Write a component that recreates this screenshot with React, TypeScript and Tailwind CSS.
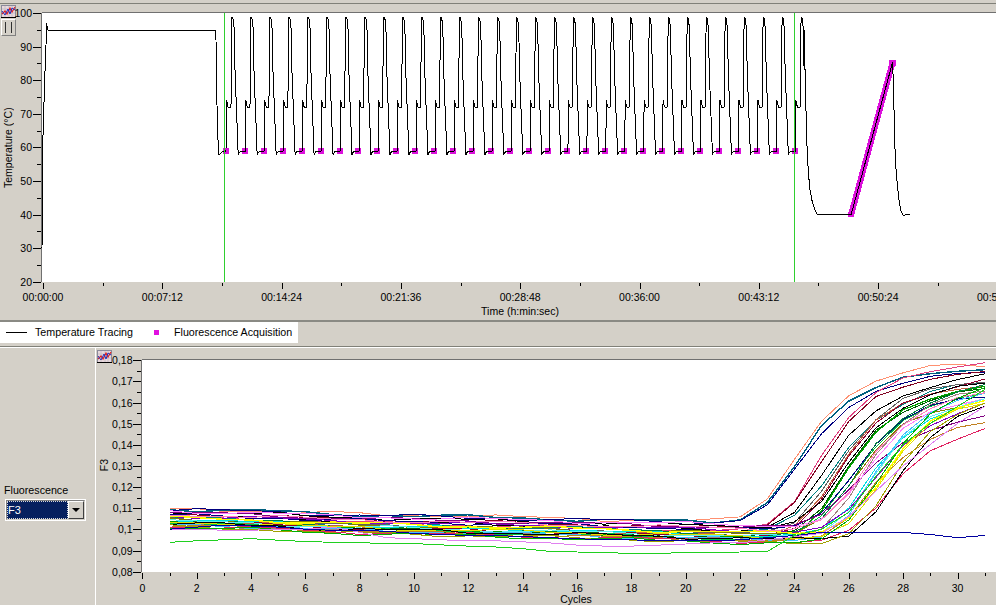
const TRACE = "#000000";
const MAGENTA = "#dc10dc";

function ChartIcon() {
  return (
    <svg width="15" height="13" viewBox="0 0 15 13" className="block">
      <rect x="0.5" y="0.5" width="14" height="12" fill="#e8d8dc" stroke="#8a8a9a" />
      <path d="M1 4h13M1 8h13M4 1v11M8 1v11M11 1v11" stroke="#c8c0c8" />
      <path d="M1 9l3-3 2 3 3-6 2 4 3-5" fill="none" stroke="#e02020" strokeWidth="1.2" />
      <path d="M1 6l3 4 3-6 2 5 2-6 3 2" fill="none" stroke="#2030c0" />
      <path d="M0 12.5h15" stroke="#000" />
    </svg>
  );
}

function buildTrace() {
  const pts: [number, number][] = [[42, 248], [43, 135], [44.7, 80], [46, 45], [46.5, 23], [47.5, 28], [48, 30]];
  for (let x = 50; x < 215; x += 3) pts.push([x, x % 2 ? 30 : 30.8]);
  pts.push([215, 30], [216, 40], [217, 105], [218, 140], [219, 155], [222, 152], [226, 151], [226.5, 100], [228, 107], [231, 107]);
  for (let i = 0; i < 31; i++) {
    const p = 232.7 + i * 18.97;
    pts.push([p - 1.5, 70], [p - 0.7, 17], [p + 0.5, 19], [p + 1.5, 29], [p + 2.3, 70]);
    if (i < 30) {
      pts.push([p + 3.8, 110], [p + 4.8, 135], [p + 5.5, 155], [p + 6.2, 153], [p + 8, 151], [p + 12.8, 151], [p + 13, 100], [p + 14.5, 107], [p + 17.3, 107]);
    }
  }
  pts.push([804, 30], [805.3, 80], [806.7, 140], [808.3, 172], [810, 190], [812.3, 202], [815, 210], [817.3, 215]);
  for (let x = 820; x < 851; x += 3) pts.push([x, x % 2 ? 215 : 214.4]);
  pts.push(
    [851, 215], [892.7, 62], [894.3, 120], [895.3, 160], [896.7, 178], [899, 200], [901, 211], [903.3, 216],
    [905, 215], [907, 214], [910, 215],
  );
  return pts.map((p) => p.join(",")).join(" ");
}

function TemperatureChart() {
  const yTicks = [];
  for (let t = 20; t <= 100; t += 5) yTicks.push(t);
  const xTicks = [];
  for (let i = 0; i <= 16; i++) xTicks.push(43 + i * 59.65);
  const labels = ["00:00:00", "00:07:12", "00:14:24", "00:21:36", "00:28:48", "00:36:00", "00:43:12", "00:50:24", "00:57:36"];
  const marks = [];
  for (let i = 0; i < 31; i++) marks.push(225.2 + i * 18.97);

  return (
    <svg width="979" height="316" viewBox="17 4 979 316" className="block shrink-0 overflow-visible">
      <rect x="42" y="13" width="954" height="269" fill="#fff" />
      <g shapeRendering="crispEdges">
        <path d="M41.5 12.5H996M41.5 12.5V282" stroke="#707070" fill="none" />
        {yTicks.map((t) => {
          const y = Math.round(13 + (100 - t) * 3.36) + 0.5;
          return <path key={t} d={`M${t % 10 === 0 ? 33 : 37} ${y}H41`} stroke={TRACE} />;
        })}
        {xTicks.map((x, i) => (
          <path key={i} d={`M${Math.round(x) + 0.5} 283V${i % 2 === 0 ? 289 : 286}`} stroke={TRACE} />
        ))}
        {marks.map((x) => (
          <rect key={x} x={Math.round(x - 2.5)} y="148" width="6" height="6" fill={MAGENTA} />
        ))}
        <path d="M851 215L892.7 62" stroke={MAGENTA} strokeWidth="6" fill="none" />
        <rect x="889" y="60" width="7" height="6" fill={MAGENTA} />
        <rect x="848" y="212" width="6" height="5" fill={MAGENTA} />
        <polyline points={buildTrace()} fill="none" stroke={TRACE} strokeLinejoin="bevel" />
        <path d="M224.5 13V282M794.5 13V282" stroke="#2fcf2f" />
      </g>
      <g fontSize="10.5" fill="#000" fontFamily="'Liberation Sans', Arial, sans-serif">
        {[100, 90, 80, 70, 60, 50, 40, 30, 20].map((t) => (
          <text key={t} x="32" y={13 + (100 - t) * 3.36 + 4} textAnchor="end">{t}</text>
        ))}
        {labels.map((l, i) => (
          <text key={l} x={43 + i * 119.3} y="301" textAnchor="middle">{l}</text>
        ))}
        <text x="520" y="315" textAnchor="middle">Time (h:min:sec)</text>
      </g>
    </svg>
  );
}

type Curve = [number, number, number, string, number?];

// offset in baseline band, midpoint cycle, value at cycle 31, colour, width
const CURVES: Curve[] = [
  [0.98, 24.3, 0.177, "#ff9070"],
  [0.95, 24.4, 0.176, "#006080", 1.4],
  [0.92, 24.5, 0.1745, "#000080"],
  [0.55, 25.1, 0.1785, "#e04080"],
  [0.7, 25.2, 0.174, "#800020"],
  [0.6, 25.5, 0.173, "#000000"],
  [0.5, 25.6, 0.169, "#008080"],
  [0.42, 25.7, 0.17, "#606060"],
  [0.35, 25.8, 0.168, "#c06040"],
  [0.3, 25.9, 0.171, "#900030"],
  [0.28, 26.0, 0.166, "#006000"],
  [0.25, 26.1, 0.167, "#00a000", 1.3],
  [0.8, 26.2, 0.169, "#000000"],
  [0.2, 26.3, 0.165, "#00c040"],
  [0.65, 26.4, 0.163, "#000080"],
  [0.45, 26.5, 0.161, "#808000"],
  [0.4, 26.6, 0.168, "#008040"],
  [0.75, 26.5, 0.153, "#800080"],
  [0.15, 26.7, 0.165, "#a08080"],
  [0.85, 26.9, 0.162, "#ff80ff"],
  [0.38, 27.0, 0.16, "#00e0e0"],
  [0.33, 27.1, 0.162, "#60f0f0"],
  [0.18, 27.2, 0.164, "#40c0ff"],
  [0.6, 27.3, 0.159, "#8000c0"],
  [0.12, 27.0, 0.15, "#c08020"],
  [0.5, 27.5, 0.161, "#ffff00", 1.4],
  [0.3, 27.6, 0.16, "#e0e000"],
  [0.08, 27.7, 0.148, "#e02060"],
  [0.22, 28.0, 0.158, "#000000"],
  [0.05, 27.8, 0.159, "#a0a000"],
  [0.68, 26.8, 0.164, "#ff80c0"],
  [0.02, 27.4, 0.167, "#00b000"],
];

const SHAPE: [number, number][] = [
  [-4, 0], [-3, 0.005], [-2, 0.04], [-1, 0.2], [0, 0.48], [1, 0.7], [2, 0.83], [3, 0.9], [4, 0.95], [5, 0.98], [6, 1], [9, 1],
];

function shape(t: number) {
  if (t <= -4) return 0;
  for (let i = 1; i < SHAPE.length; i++) {
    if (t <= SHAPE[i][0]) {
      const [a, b] = SHAPE[i - 1];
      const [c, d] = SHAPE[i];
      return b + ((t - a) / (c - a)) * (d - b);
    }
  }
  return 1;
}

const lerp = (a: number, b: number, t: number) => a + (b - a) * t;
const toX = (c: number) => 142.4 + c * 27.17;
const toY = (v: number) => 359 + (0.18 - v) * 2115;

function base(offset: number, c: number, seed: number) {
  const t = (c - 1) / 21;
  const low = lerp(0.1, 0.0935, t);
  const high = lerp(0.1094, 0.1035, t);
  const wiggle = Math.sin(c * 0.9 + seed * 1.7) * 0.0007 + Math.sin(c * 2.3 + seed * 3.1) * 0.0004;
  return lerp(low, high, offset) + wiggle + (c < 6 ? 0.0006 : 0);
}

function curvePoints(curve: Curve, seed: number) {
  const [offset, mid, top] = curve;
  const pts = [];
  for (let c = 1; c <= 31; c++) {
    const b = base(offset, c, seed);
    const amount = top - base(offset, 31, seed);
    const wob = c > mid ? Math.sin(c * 1.3 + seed) * 0.0006 : 0;
    const v = b + (amount * shape(c - mid)) / shape(31 - mid) + wob;
    pts.push(`${toX(c).toFixed(1)},${toY(v).toFixed(1)}`);
  }
  return pts.join(" ");
}

const GREEN_LOW = [0.0938, 0.0945, 0.095, 0.0955, 0.0948, 0.0942, 0.0938, 0.0935, 0.0934, 0.0932, 0.0926, 0.092, 0.0916, 0.0908, 0.0895, 0.0892, 0.089, 0.0885, 0.0887, 0.0888, 0.089, 0.0892, 0.0895, 0.097, 0.1, 0.108, 0.125, 0.14, 0.15, 0.158, 0.166];
const BLUE_FLAT = [0.1, 0.101, 0.102, 0.1015, 0.101, 0.1, 0.0995, 0.0995, 0.099, 0.098, 0.0975, 0.097, 0.097, 0.0965, 0.096, 0.0955, 0.095, 0.095, 0.0945, 0.0945, 0.0945, 0.095, 0.096, 0.097, 0.0985, 0.0985, 0.0985, 0.0985, 0.0975, 0.096, 0.097];
const PINK_DIP = [0.1, 0.1, 0.0995, 0.0995, 0.1, 0.1, 0.101, 0.0985, 0.096, 0.0955, 0.095, 0.0945, 0.0945, 0.094, 0.0935, 0.0925, 0.092, 0.092, 0.0925, 0.093, 0.0935, 0.0935, 0.095, 0.0965, 0.098, 0.106, 0.118, 0.13, 0.14, 0.15, 0.158];

const fixed = (vals: number[]) =>
  vals.map((v, i) => `${toX(i + 1).toFixed(1)},${toY(v).toFixed(1)}`).join(" ");

function FluorescenceChart() {
  const yLabels = ["0,18", "0,17", "0,16", "0,15", "0,14", "0,13", "0,12", "0,11", "0,1", "0,09", "0,08"];
  const minor = [];
  for (let i = 0; i <= 20; i++) minor.push(i);
  const xTicks = [];
  for (let c = 0; c <= 31; c++) xTicks.push(c);

  return (
    <svg width="900" height="258" viewBox="96 347 900 258" className="block shrink-0">
      <rect x="142" y="359" width="854" height="212" fill="#fff" />
      <g shapeRendering="crispEdges">
        <path d="M141.5 358.5H996M141.5 358.5V571" stroke="#707070" fill="none" />
        {minor.map((i) => (
          <path key={i} d={`M${i % 2 === 0 ? 133 : 137} ${Math.round(359.3 + i * 10.57) + 0.5}H141`} stroke="#000" />
        ))}
        {xTicks.map((c) => (
          <path key={c} d={`M${Math.round(toX(c)) + 0.5} 572V${c % 2 === 0 ? 578 : 575}`} stroke="#000" />
        ))}
        {CURVES.map((curve, i) => (
          <polyline key={i} points={curvePoints(curve, i + 1)} fill="none" stroke={curve[3]} strokeWidth={curve[4] ?? 1} />
        ))}
        <polyline points={fixed(PINK_DIP)} fill="none" stroke="#e080f0" />
        <polyline points={fixed(BLUE_FLAT)} fill="none" stroke="#0000a0" />
        <polyline points={fixed(GREEN_LOW)} fill="none" stroke="#20d020" />
      </g>
      <g fontSize="10.5" fill="#000" fontFamily="'Liberation Sans', Arial, sans-serif">
        {yLabels.map((l, i) => (
          <text key={l} x="132.5" y={359.3 + i * 21.14 + 4} textAnchor="end">{l}</text>
        ))}
        {xTicks.filter((c) => c % 2 === 0).map((c) => (
          <text key={c} x={toX(c)} y="591" textAnchor="middle">{c}</text>
        ))}
        <text x="576" y="602" textAnchor="middle">Cycles</text>
        <text transform="translate(108 464) rotate(-90)" textAnchor="middle">F3</text>
      </g>
    </svg>
  );
}

export default function App() {
  return (
    <div className="w-[996px] h-[605px] overflow-hidden flex flex-col bg-[#d4d0c8] text-black text-[10.7px] font-['Liberation_Sans',Arial,sans-serif]">
      {/* top edge of the window above */}
      <div className="h-[4px] shrink-0 border-b border-[#808078] bg-[#d4d0c8]" />

      {/* temperature plot */}
      <div className="h-[316px] shrink-0 flex">
        <div className="w-[17px] shrink-0 flex flex-col items-start pl-[1px] pt-[1px] gap-[1px]">
          <ChartIcon />
          <button className="w-[15px] h-[17px] flex items-center justify-center gap-[5px] bg-[#d4d0c8] border border-t-white border-l-white border-r-[#808080] border-b-[#808080]">
            <span className="w-[1px] h-[11px] bg-[#303030]" />
            <span className="w-[1px] h-[11px] bg-[#303030]" />
          </button>
          <span className="mt-[69px] ml-[1px] h-[84px] leading-[13px] whitespace-nowrap text-[10.5px] text-center [writing-mode:vertical-rl] rotate-180">
            Temperature (°C)
          </span>
        </div>
        <TemperatureChart />
      </div>

      {/* legend */}
      <div className="h-[27px] shrink-0 border-t-2 border-[#8a8a84] border-b border-b-[#808078]">
        <div className="w-[298px] h-[21px] bg-white flex items-center pl-[6px]">
          <span className="w-[21px] h-[1px] bg-black" />
          <span className="ml-[8px]">Temperature Tracing</span>
          <span className="ml-[21px] w-[5px] h-[5px] bg-[#e010e0]" />
          <span className="ml-[15px]">Fluorescence Acquisition</span>
        </div>
      </div>

      {/* fluorescence plot */}
      <div className="flex-1 flex border-t border-white">
        <div className="w-[95px] shrink-0 flex flex-col pl-[5px] pt-[136px]">
          <span className="-ml-[1px] leading-[13px]">Fluorescence</span>
          <div className="w-[81px] h-[22px] mt-[2px] bg-white p-[1px]">
            <div className="h-full flex border border-t-[#808080] border-l-[#808080] border-r-[#d4d0c8] border-b-[#d4d0c8]">
              <div className="flex-1 bg-[#06205f] text-white text-[11px] flex items-center pl-[1px] outline-1 -outline-offset-1 outline-dotted outline-[#d8d8d8]">
                F3
              </div>
              <div className="w-[16px] flex items-center justify-center bg-[#d4d0c8] border border-t-white border-l-white border-r-[#404040] border-b-[#404040]">
                <span className="w-0 h-0 border-x-[4px] border-x-transparent border-t-[4px] border-t-black" />
              </div>
            </div>
          </div>
        </div>
        <div className="relative border-l border-white flex">
          <FluorescenceChart />
          <div className="absolute left-[1px] top-[2px]">
            <ChartIcon />
          </div>
        </div>
      </div>
    </div>
  );
}
